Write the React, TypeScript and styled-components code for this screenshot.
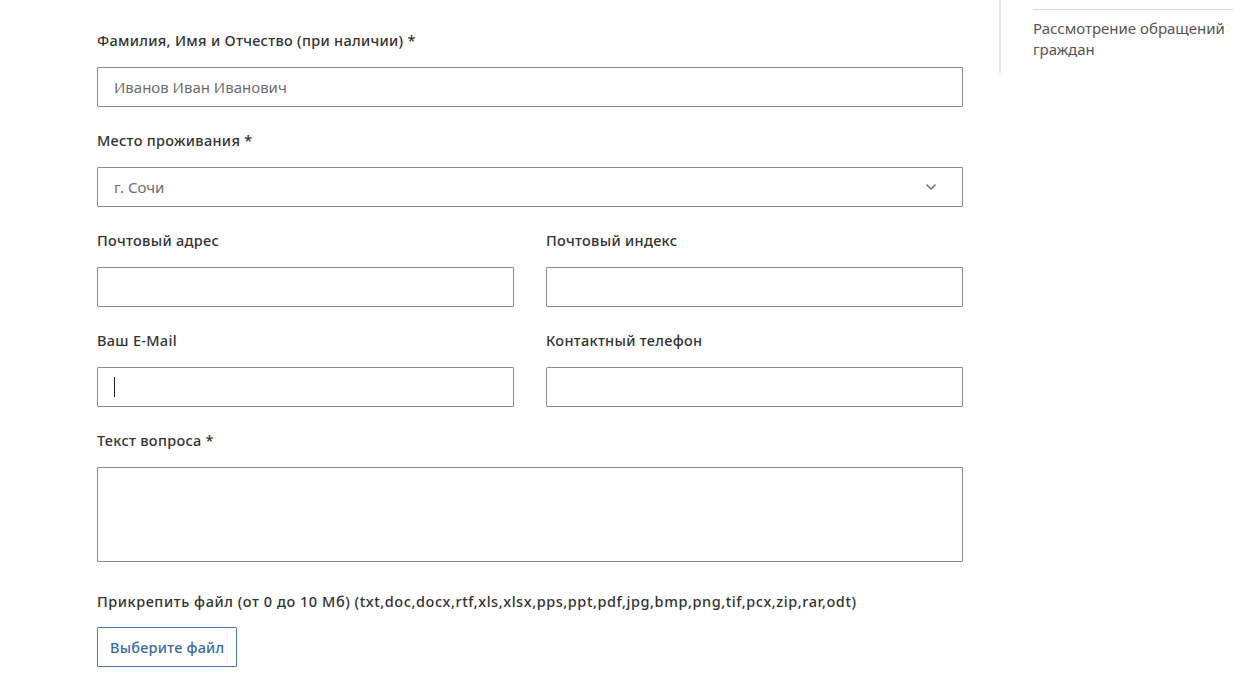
import React from "react"
import styled, { createGlobalStyle } from "styled-components"

const GlobalStyle = createGlobalStyle`
  html, body {
    margin: 0;
    padding: 0;
    background: #fff;
  }
  body {
    font-family: "Noto Sans", "Liberation Sans", sans-serif;
    color: #333;
  }
`

type FieldProps = {
  label: string
  children: React.ReactNode
  spaced?: boolean
  wide?: boolean
}

const Field = ({ label, children, spaced, wide }: FieldProps) => (
  <FieldBox $spaced={spaced}>
    <Label $wide={wide}>{label}</Label>
    {children}
  </FieldBox>
)

const Chevron = () => (
  <svg width="12" height="8" viewBox="0 0 12 8" fill="none">
    <path d="M1.5 1.5 6 6l4.5-4.5" stroke="#666" strokeWidth="1.3" />
  </svg>
)

const App = () => {
  return (
    <Page>
      <GlobalStyle />
      <Form>
        <Field label="Фамилия, Имя и Отчество (при наличии) *">
          <Input placeholder="Иванов Иван Иванович" />
        </Field>
        <Field label="Место проживания *">
          <Select>
            <SelectValue>г. Сочи</SelectValue>
            <Chevron />
          </Select>
        </Field>
        <Row>
          <Field label="Почтовый адрес">
            <Input />
          </Field>
          <Field label="Почтовый индекс">
            <Input />
          </Field>
        </Row>
        <Row>
          <Field label="Ваш E-Mail">
            <FakeInput>
              <Caret />
            </FakeInput>
          </Field>
          <Field label="Контактный телефон">
            <Input />
          </Field>
        </Row>
        <Field label="Текст вопроса *">
          <TextArea />
        </Field>
        <Field
          spaced
          wide
          label="Прикрепить файл (от 0 до 10 Мб) (txt,doc,docx,rtf,xls,xlsx,pps,ppt,pdf,jpg,bmp,png,tif,pcx,zip,rar,odt)"
        >
          <FileButton type="button">Выберите файл</FileButton>
        </Field>
      </Form>
      <Sidebar>
        <SideLink>Рассмотрение обращений граждан</SideLink>
      </Sidebar>
    </Page>
  )
}

const Page = styled.div`
  display: flex;
  align-items: flex-start;
  padding-left: 97px;
  width: 1247px;
  box-sizing: border-box;
`

const Form = styled.form`
  width: 866px;
  display: flex;
  flex-direction: column;
  gap: 23px;
  padding-top: 30px;
`

const Row = styled.div`
  display: grid;
  grid-template-columns: 1fr 1fr;
  column-gap: 32px;
`

const FieldBox = styled.div<{ $spaced?: boolean }>`
  display: flex;
  flex-direction: column;
  align-items: flex-start;
  gap: ${(p) => (p.$spaced ? "16px" : "17px")};
  margin-top: ${(p) => (p.$spaced ? "6px" : "0")};
`

const Label = styled.label<{ $wide?: boolean }>`
  font-size: 14.5px;
  line-height: 20px;
  font-weight: 500;
  color: #333;
  letter-spacing: ${(p) => (p.$wide ? "0.55px" : "0.3px")};
`

const Input = styled.input`
  width: 100%;
  height: 40px;
  box-sizing: border-box;
  border: 1px solid #8c8c8c;
  border-radius: 1px;
  padding: 0 16px;
  font: inherit;
  font-size: 15px;
  color: #333;
  outline: none;
  &::placeholder {
    color: #6e6e6e;
  }
`

const FakeInput = styled.div`
  width: 100%;
  height: 40px;
  box-sizing: border-box;
  border: 1px solid #8c8c8c;
  border-radius: 1px;
  padding: 9px 16px;
`

const Caret = styled.span`
  display: block;
  width: 1px;
  height: 20px;
  background: #222;
`

const Select = styled.div`
  width: 100%;
  height: 40px;
  box-sizing: border-box;
  border: 1px solid #8c8c8c;
  border-radius: 1px;
  padding: 0 25px 0 16px;
  display: flex;
  align-items: center;
  justify-content: space-between;
`

const SelectValue = styled.span`
  font-size: 15px;
  color: #6e6e6e;
`

const TextArea = styled.textarea`
  width: 100%;
  height: 95px;
  box-sizing: border-box;
  border: 1px solid #8c8c8c;
  border-radius: 1px;
  resize: none;
  font: inherit;
  outline: none;
`

const FileButton = styled.button`
  height: 40px;
  padding: 0 12px;
  background: #fff;
  border: 1px solid #4a78b5;
  border-radius: 1px;
  color: #3b69a8;
  font-family: inherit;
  font-size: 14.5px;
  font-weight: 500;
  letter-spacing: 0.2px;
  cursor: pointer;
`

const Sidebar = styled.aside`
  margin-left: 36px;
  border-left: 2px solid #e6e6e6;
  padding: 9px 0 18px 32px;
  height: 73px;
  box-sizing: border-box;
`

const SideLink = styled.div`
  width: 200px;
  border-top: 1px solid #d9d9d9;
  padding-top: 8px;
  font-size: 15px;
  line-height: 21px;
  color: #555;
`

export default App
